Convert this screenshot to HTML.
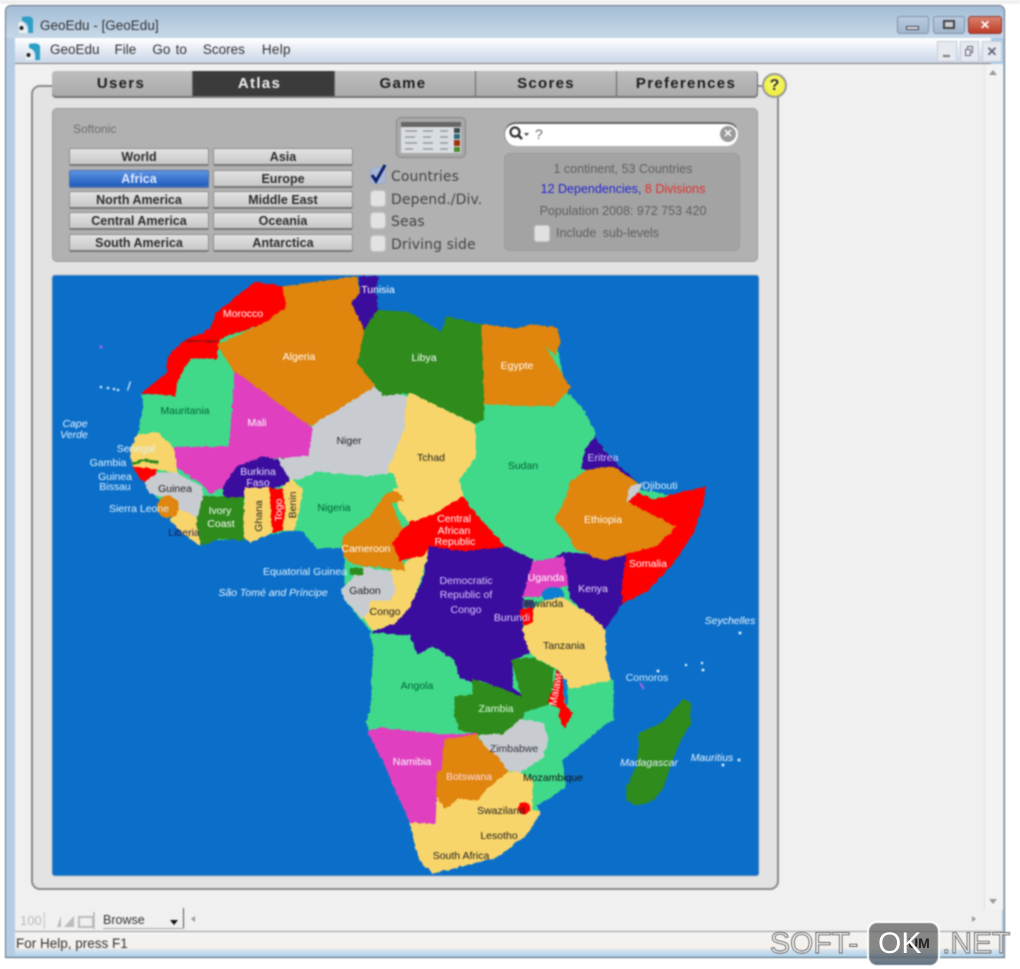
<!DOCTYPE html>
<html><head><meta charset="utf-8"><style>
html,body{margin:0;padding:0;width:1020px;height:969px;overflow:hidden;background:#fff}
body{font-family:"Liberation Sans",sans-serif;position:relative}
#w{position:absolute;left:0;top:0;width:1020px;height:969px;filter:blur(.7px)}
.a{position:absolute}
.t{position:absolute;top:71px;height:26px;background:linear-gradient(#bdbdbd,#aaa);border-right:1px solid #666;border-bottom:1px solid #777;box-sizing:border-box;font:bold 15px/25px "Liberation Sans",sans-serif;letter-spacing:1.3px;text-align:center;color:#1c1c1c}
.b{position:absolute;width:140px;height:18px;background:linear-gradient(#e2e2e2,#c8c8c8);border:1px solid #8e8e8e;border-bottom:2px solid #777;box-sizing:border-box;border-radius:2px;font:bold 12.5px/17px "Liberation Sans",sans-serif;text-align:center;color:#2c2c2c}
.c{position:absolute;left:370px;width:16px;height:17px;background:#e2e2e2;border:1px solid #c4c4c4;border-radius:4px;box-sizing:border-box}
.l{position:absolute;left:391px;font:14px/18px "DejaVu Sans",sans-serif;color:#444;letter-spacing:.1px;white-space:nowrap}
.i{position:absolute;left:504px;width:238px;text-align:center;font:12.5px/14px "Liberation Sans",sans-serif;color:#5f5f5f;white-space:nowrap}
svg text{font-family:"Liberation Sans",sans-serif;font-size:10.5px;text-anchor:middle}
.wt{fill:#fff}.dk{fill:#222}.pl{fill:#d9c8ff}.it{font-style:italic;fill:#e8f4ff}
#land polygon[fill="#3fd98a"]{stroke:#3fd98a}
#land polygon[fill="#ff0000"]{stroke:#ff0000}
#land polygon[fill="#e08508"]{stroke:#e08508}
#land polygon[fill="#3a0d9e"]{stroke:#3a0d9e}
#land polygon[fill="#2e8b1e"]{stroke:#2e8b1e}
#land polygon[fill="#f8d56a"]{stroke:#f8d56a}
#land polygon[fill="#c8ccd0"]{stroke:#c8ccd0}
#land polygon[fill="#e03fc0"]{stroke:#e03fc0}
#land polygon{stroke-width:1.2}
</style></head><body><div id="w">
<div class="a" style="left:0;top:0;width:1020px;height:4px;background:#efefef"></div>
<div class="a" style="left:5px;top:5px;width:1000px;height:953px;background:linear-gradient(90deg,#b4cde4,#c8d8e8 50%,#a9c9e6);border:1px solid #66727e;border-radius:6px 6px 0 0;box-sizing:border-box"></div>
<div class="a" style="left:6px;top:6px;width:998px;height:32px;background:linear-gradient(#a3bdd6,#c7d8e8);border-radius:5px 5px 0 0"></div>
<svg class="a" style="left:17px;top:15px" width="18" height="20"><path d="M5 2 Q14 0 16 4 L16 18 L11 18 Q13 8 5 6z" fill="#2d9fc6"/><path d="M1 8 Q8 3 11 18 L2 18z" fill="#e8eef2"/><circle cx="4.500" cy="13" r="2" fill="#222"/></svg>
<div class="a" style="left:40px;top:18px;font-size:13.5px;line-height:16px;color:#333">GeoEdu - [GeoEdu]</div>
<div class="a" style="left:897px;top:16px;width:32px;height:18px;background:linear-gradient(#b9cade,#a0b5cb);border:1px solid #7f93aa;border-radius:3px;box-sizing:border-box"></div>
<div class="a" style="left:906px;top:26px;width:13px;height:4px;border:1px solid #445;background:#e4e4e4;box-sizing:border-box"></div>
<div class="a" style="left:933px;top:16px;width:32px;height:18px;background:linear-gradient(#b9cade,#a0b5cb);border:1px solid #7f93aa;border-radius:3px;box-sizing:border-box"></div>
<div class="a" style="left:943px;top:20px;width:12px;height:9px;border:2px solid #444;background:#c9ced4;box-sizing:border-box"></div>
<div class="a" style="left:968px;top:16px;width:34px;height:18px;background:linear-gradient(#d9826f,#be3c26);border:1px solid #8a3d33;border-radius:3px;box-sizing:border-box;color:#fff;font:bold 12px/16px 'Liberation Sans',sans-serif;text-align:center">✕</div>

<div class="a" style="left:15px;top:38px;width:976px;height:25px;background:linear-gradient(#fff,#ced9ea 90%);border-bottom:1px solid #7c7c7c"></div>
<svg class="a" style="left:24px;top:42px" width="18" height="20"><path d="M5 2 Q14 0 16 4 L16 18 L11 18 Q13 8 5 6z" fill="#2d9fc6"/><path d="M1 8 Q8 3 11 18 L2 18z" fill="#e8eef2"/><circle cx="4.500" cy="13" r="2" fill="#222"/></svg>
<div class="a" style="left:50px;top:42px;font-size:13.5px;line-height:16px;color:#333;white-space:nowrap">GeoEdu<span style="margin-left:15px">File</span><span style="margin-left:16px;word-spacing:1.500px">Go to</span><span style="margin-left:16px">Scores</span><span style="margin-left:17px;letter-spacing:.3px">Help</span></div>
<div class="a" style="left:937px;top:41px;width:20px;height:21px;background:#e6e9ef;border:1px solid #c6ced9;box-sizing:border-box"></div>
<div class="a" style="left:943px;top:55px;width:7px;height:2px;background:#777"></div>
<div class="a" style="left:960px;top:41px;width:19px;height:21px;background:#e6e9ef;border:1px solid #c6ced9;box-sizing:border-box"></div>
<div class="a" style="left:967px;top:46px;width:6px;height:7px;border:1px solid #667;box-sizing:border-box"></div>
<div class="a" style="left:965px;top:49px;width:6px;height:7px;border:1px solid #667;background:#e6e9ef;box-sizing:border-box"></div>
<div class="a" style="left:982px;top:41px;width:20px;height:21px;background:#e6e9ef;border:1px solid #c6ced9;box-sizing:border-box;font:bold 13px/19px 'Liberation Sans',sans-serif;text-align:center;color:#667">✕</div>

<div class="a" style="left:15px;top:64px;width:987px;height:868px;background:#f0f0f0"></div>
<div class="a" style="left:984px;top:64px;width:18px;height:846px;background:#f3f3f3;border-left:1px solid #e2e2e2"></div>
<div class="a" style="left:989px;top:70px;width:0;height:0;border:4px solid transparent;border-bottom:5px solid #999;border-top:0"></div>
<div class="a" style="left:989px;top:899px;width:0;height:0;border:4px solid transparent;border-top:5px solid #999;border-bottom:0"></div>

<div class="a" style="left:31px;top:85px;width:748px;height:805px;background:#e3e3e3;border:2px solid #8a8a8a;border-radius:9px;box-sizing:border-box"></div>
<div class="a" style="left:52px;top:71px;width:706px;height:26px;background:#aaa;border-radius:4px;overflow:hidden;box-shadow:0 1px 0 #777"></div>
<div class="t" style="left:52px;width:141px;border-radius:4px 0 0 4px;padding-right:2px">Users</div>
<div class="t" style="left:193px;width:142px;background:#3b3b3b;color:#eee;padding-right:8px">Atlas</div>
<div class="t" style="left:335px;width:141px;padding-right:4px">Game</div>
<div class="t" style="left:476px;width:141px">Scores</div>
<div class="t" style="left:617px;width:141px;border-radius:0 4px 4px 0;padding-right:2px">Preferences</div>
<div class="a" style="left:762px;top:73px;width:25px;height:25px;border-radius:50%;background:radial-gradient(circle at 50% 40%,#fbfb7a,#e8e828);border:2px solid #999;box-sizing:border-box;font:bold 16px/21px 'Liberation Sans',sans-serif;text-align:center;color:#333">?</div>

<div class="a" style="left:52px;top:108px;width:706px;height:154px;background:#b1b1b1;border-radius:5px;border:1px solid #9d9d9d;box-sizing:border-box"></div>
<div class="a" style="left:73px;top:122px;font-size:12px;line-height:14px;color:#6e6e6e">Softonic</div>
<div class="b" style="left:69px;top:148px">World</div>
<div class="b" style="left:213px;top:148px">Asia</div>
<div class="b" style="left:69px;top:170px;background:linear-gradient(#5d93e2,#1f5cbd);color:#dfeaff;border-color:#4c6fa8">Africa</div>
<div class="b" style="left:213px;top:170px">Europe</div>
<div class="b" style="left:69px;top:191px">North America</div>
<div class="b" style="left:213px;top:191px">Middle East</div>
<div class="b" style="left:69px;top:212px">Central America</div>
<div class="b" style="left:213px;top:212px">Oceania</div>
<div class="b" style="left:69px;top:234px">South America</div>
<div class="b" style="left:213px;top:234px">Antarctica</div>

<div class="a" style="left:396px;top:117px;width:70px;height:41px;background:#a8a8a8;border:1px solid #888;border-radius:5px;box-sizing:border-box"></div>
<svg class="a" style="left:396px;top:117px" width="70" height="41">
<rect x="5" y="5" width="60" height="31" fill="#d9dde2"/><rect x="5" y="5" width="60" height="5" fill="#666"/>
<g stroke="#8a8f96" stroke-width="1.200"><path d="M9 14h12M27 14h10M44 14h8M9 20h10M27 20h8M44 20h8M9 26h12M27 26h10M44 26h8M9 32h8M27 32h10M44 32h8"/></g>
<rect x="58" y="11" width="6" height="5" fill="#3a4a4a"/><rect x="58" y="17" width="6" height="5" fill="#2a6a7a"/><rect x="58" y="23" width="6" height="6" fill="#a03010"/><rect x="58" y="30" width="6" height="5" fill="#4a8a2a"/>
</svg>

<div class="c" style="top:167px;background:#a9b7d6;border-color:#9aa8c8"></div>
<svg class="a" style="left:368px;top:162px" width="22" height="24"><path d="M4 13 L8 19 L17 3" fill="none" stroke="#0a1f6e" stroke-width="3"/></svg>
<div class="l" style="top:168px">Countries</div>
<div class="c" style="top:190px"></div><div class="l" style="top:191px">Depend./Div.</div>
<div class="c" style="top:212px"></div><div class="l" style="top:213px">Seas</div>
<div class="c" style="top:235px"></div><div class="l" style="top:236px">Driving side</div>

<div class="a" style="left:504px;top:122px;width:235px;height:24px;background:#fff;border-radius:12px;border-top:2px solid #666;border-left:1px solid #888;border-right:1px solid #aaa;box-sizing:border-box"></div>
<svg class="a" style="left:508px;top:125px" width="24" height="18"><circle cx="7" cy="7" r="4.500" fill="none" stroke="#333" stroke-width="2.200"/><path d="M10 10 L14 14" stroke="#333" stroke-width="2.600"/><path d="M16 8h5l-2.500 3z" fill="#444"/></svg>
<div class="a" style="left:535px;top:126px;font-size:14px;line-height:16px;color:#666">?</div>
<div class="a" style="left:720px;top:126px;width:16px;height:16px;border-radius:50%;background:#9a9a9a;font:bold 11px/16px 'Liberation Sans',sans-serif;text-align:center;color:#fff">✕</div>

<div class="a" style="left:504px;top:153px;width:236px;height:98px;background:#a3a3a3;border-radius:6px;border:1px solid #9a9a9a;box-sizing:border-box"></div>
<div class="i" style="top:162px">1 continent, 53 Countries</div>
<div class="i" style="top:182px"><span style="color:#2525d0">12 Dependencies,</span> <span style="color:#e0302c">8 Divisions</span></div>
<div class="i" style="top:204px">Population 2008: 972 753 420</div>
<div class="a" style="left:534px;top:225px;width:16px;height:17px;background:#e0e0e0;border:1px solid #c4c4c4;border-radius:3px;box-sizing:border-box"></div>
<div class="a" style="left:556px;top:226px;font-size:12.5px;line-height:14px;color:#5f5f5f;word-spacing:3px">Include sub-levels</div>

<svg class="a" style="left:0;top:0" width="1020" height="969">
<defs><filter id="r" filterUnits="userSpaceOnUse" x="50" y="270" width="710" height="610"><feTurbulence type="fractalNoise" baseFrequency=".22" numOctaves="2" seed="4"/><feDisplacementMap in="SourceGraphic" scale="3.500" xChannelSelector="R" yChannelSelector="G"/></filter></defs>
<rect x="52" y="275" width="707" height="601" rx="3" fill="#0b6fc9" stroke="#a9b4bf"/>
<g id="land" stroke-linejoin="round" filter="url(#r)">
<polygon fill="#3fd98a" points="240,300 280,290 355,280 375,310 440,335 480,330 555,335 565,390 590,433 620,470 640,490 690,500 670,560 620,600 600,635 605,680 610,720 562,760 560,790 530,810 500,850 430,865 415,825 385,760 372,730 372,680 375,635 345,600 345,545 315,545 300,528 250,538 205,540 150,490 135,450 145,400 175,375 190,350"/>
<polygon fill="#3fd98a" points="190,358 216,358 218,350 240,372 235,372 230,447 173,448 157,433 138,435 145,413 142,395 175,395 177,380"/>
<polygon fill="#ff0000" points="255,282 283,287 287,307 267,322 220,338 216,358 190,358 177,380 175,395 142,393 167,373 168,357 183,342 210,330 217,313 237,297"/>
<path d="M184 341h33" stroke="#7a1a1a" stroke-width="1.200"/>
<polygon fill="#e08508" points="283,287 357,277 360,303 352,303 365,330 358,363 375,387 317,423 307,425 235,372 218,345 267,322 287,307"/>
<polygon fill="#3a0d9e" points="360,277 378,277 375,290 378,310 365,330 352,303 360,293"/>
<polygon fill="#c8ccd0" points="317,423 375,387 390,393 407,397 410,430 390,470 393,473 367,477 317,472 300,478 290,480 277,460 307,455 312,427"/>
<polygon fill="#2e8b1e" points="378,310 410,313 442,333 447,317 482,325 485,420 475,423 410,393 403,393 383,395 358,363 365,330"/>
<polygon fill="#e08508" points="482,325 517,329 533,325 557,328 560,342 555,355 542,342 570,388 553,407 485,405"/>
<polygon fill="#3fd98a" points="485,405 553,407 570,395 583,410 595,433 582,470 567,497 555,520 568,533 575,548 533,560 505,547 487,527 472,510 463,497 458,480 475,457 475,425 485,420"/>
<polygon fill="#f8d56a" points="410,393 475,425 475,457 458,480 463,497 433,515 410,523 400,510 388,470 405,430 407,397"/>
<polygon fill="#e03fc0" points="235,372 307,425 312,427 308,455 277,458 263,457 237,467 223,487 210,493 202,483 193,478 177,467 173,448 230,447"/>
<polygon fill="#f8d56a" points="138,435 157,433 173,448 177,472 157,470 133,467 130,450"/>
<path d="M132 464 L145 460 L158 463" fill="none" stroke="#2e8b1e" stroke-width="2.500"/>
<polygon fill="#ff0000" points="133,467 157,470 150,482 142,480"/>
<polygon fill="#c8ccd0" points="145,483 157,473 177,473 202,487 203,497 197,518 180,510 167,497 150,493"/>
<polygon fill="#f8d56a" points="180,510 197,518 198,528 200,545 183,533 170,520"/>
<ellipse cx="168" cy="507" rx="11" ry="11" fill="#e08508"/>
<polygon fill="#2e8b1e" points="203,497 223,497 243,498 244,540 220,538 202,545 197,523"/>
<polygon fill="#3a0d9e" points="223,487 237,467 263,457 277,460 288,478 288,483 270,488 245,488 243,497 225,497"/>
<polygon fill="#f8d56a" points="245,488 270,488 273,532 250,542 244,537"/>
<polygon fill="#f8d56a" points="282,488 292,480 303,490 295,530 282,530"/>
<polygon fill="#ff0000" points="270,488 282,490 285,508 282,530 273,532"/>
<polygon fill="#3fd98a" points="303,480 317,472 367,477 393,473 397,487 387,493 370,517 343,537 343,547 317,548 310,532 295,530 303,497"/>
<polygon fill="#f8d56a" points="390,572 405,565 410,560 423,552 430,547 420,580 410,608 397,623 373,630 362,615 370,600 390,600 395,590"/>
<polygon fill="#e08508" points="397,492 403,500 390,503 403,530 393,543 405,570 363,565 352,563 343,553 343,537 370,517 387,493"/>
<polygon fill="#ff0000" points="403,530 410,523 433,515 463,497 472,510 487,527 505,547 465,552 430,547 423,555 400,560 393,543"/>
<polygon fill="#c8ccd0" points="363,567 390,572 395,590 390,600 370,600 368,612 362,618 345,600 342,590"/>
<rect x="350" y="568" width="13" height="7" fill="#2e8b1e"/>
<polygon fill="#3fd98a" points="370,633 410,635 418,654 433,645 455,660 458,677 473,678 473,695 455,697 455,717 462,733 443,735 370,732 367,722 377,687 378,660"/>
<polygon fill="#3a0d9e" points="430,547 465,552 505,547 533,560 527,590 523,597 522,623 530,652 512,660 512,687 523,698 512,693 480,680 473,682 460,677 455,660 433,645 418,654 410,635 373,632 397,623 410,608 423,580"/>
<polygon fill="#3a0d9e" points="563,552 590,555 607,560 627,553 622,590 623,602 605,628 590,615 570,598 568,580 540,570"/>
<polygon fill="#e03fc0" points="533,562 563,557 568,585 548,590 540,596 523,597 528,580"/>
<ellipse cx="553" cy="595" rx="11" ry="8" fill="#0b7fd0"/>
<polygon fill="#3fd98a" points="561,684 613,680 613,720 593,730 563,757 562,760 565,787 533,803 540,812 532,810 532,780 520,772 543,757 547,730 537,722 523,712 548,705"/>
<polygon fill="#f8d56a" points="560,597 593,617 605,630 605,657 610,680 570,688 560,670 537,658 530,652 523,630 533,610 543,602"/>
<polygon fill="#ff0000" points="520,610 533,608 532,622 524,624"/>
<rect x="522" y="600" width="12" height="8" fill="#3a4a8a"/>
<polygon fill="#ff0000" points="627,502 638,493 653,500 705,487 703,503 693,533 673,563 648,590 623,603 622,590 627,553 657,545 675,527"/>
<polygon fill="#3a0d9e" points="595,437 603,450 620,467 637,483 613,467 587,470 582,468 585,450"/>
<polygon fill="#e08508" points="587,470 613,467 637,483 627,502 675,527 657,545 627,553 603,560 575,548 568,533 555,520 567,497 570,483"/>
<polygon fill="#c8ccd0" points="627,502 630,487 642,483 638,492"/>
<polygon fill="#0b7fd0" points="562,678 567,680 568,705 564,703" style="stroke:none"/>
<polygon fill="#2e8b1e" points="473,680 512,693 522,698 512,660 533,658 553,668 552,697 548,705 523,712 523,718 503,735 483,735 460,730 455,717 455,697 473,695"/>
<polygon fill="#ff0000" points="557,670 562,677 563,703 572,713 565,727 560,720 560,708 548,702 553,690"/>
<polygon fill="#c8ccd0" points="480,735 503,735 520,720 543,723 547,740 543,757 520,772 507,770 500,760 485,747"/>
<polygon fill="#f8d56a" points="507,772 520,773 532,780 532,810 540,812 527,833 497,857 457,867 433,873 420,860 410,823 435,823 437,797 445,808 457,798 477,800 487,788"/>
<polygon fill="#e03fc0" points="368,732 380,728 443,735 477,734 445,740 442,770 437,772 435,823 410,822 397,793 383,760"/>
<polygon fill="#e08508" points="445,740 477,735 485,747 500,760 507,772 487,788 477,800 457,798 445,808 437,797 437,772 442,770"/>
<circle cx="524" cy="808" r="6" fill="#ff0000"/>
<polygon fill="#2e8b1e" points="683,700 690,703 690,723 677,747 663,787 653,800 637,805 627,800 627,787 637,767 640,733 663,723"/>
</g>
<g fill="#cfe8fa"><circle cx="101" cy="347" r="1.500" fill="#b060e0"/><circle cx="101" cy="387" r="1.300"/><circle cx="108" cy="388" r="1.300"/><circle cx="114" cy="389" r="1.300"/><circle cx="118" cy="390" r="1.300"/><path d="M127 390l3-9 1 1-3 9z"/><circle cx="658" cy="671" r="1.500"/><circle cx="703" cy="670" r="1.500"/><circle cx="686" cy="665" r="1.300"/><circle cx="702" cy="663" r="1.300"/><circle cx="739" cy="760" r="1.500"/><circle cx="723" cy="765" r="1.500"/><circle cx="740" cy="633" r="1.500"/><path d="M640 683l4 6" stroke="#b060e0" stroke-width="2"/></g>

<text class="wt" x="243" y="317">Morocco</text>
<text class="wt" x="299" y="360">Algeria</text>
<text class="wt" x="378" y="293">Tunisia</text>
<text class="wt" x="424" y="361">Libya</text>
<text class="wt" x="517" y="369">Egypte</text>
<text class="dk" x="185" y="414" style="fill:#063">Mauritania</text>
<text class="wt" x="257" y="426">Mali</text>
<text class="dk" x="349" y="444">Niger</text>
<text class="dk" x="431" y="461">Tchad</text>
<text class="dk" x="523" y="469" style="fill:#063">Sudan</text>
<text class="pl" x="603" y="461">Eritrea</text>
<text class="wt" x="660" y="489" style="fill:#dff2ff">Djibouti</text>
<text class="wt" x="603" y="523">Ethiopia</text>
<text class="wt" x="454" y="522">Central</text><text class="wt" x="454" y="534">African</text><text class="wt" x="455" y="545">Republic</text>
<text class="wt" x="648" y="567">Somalia</text>
<text class="it" x="75" y="427" font-size="10">Cape</text><text class="it" x="74" y="438">Verde</text>
<text fill="#dff2ff" x="136" y="452">Senegal</text>
<text fill="#dff2ff" x="108" y="466">Gambia</text>
<text fill="#dff2ff" x="115" y="480">Guinea</text><text fill="#dff2ff" x="115" y="490">Bissau</text>
<text fill="#dff2ff" x="139" y="512">Sierra Leone</text>
<text class="dk" x="175" y="492">Guinea</text>
<text class="dk" x="184" y="536" style="fill:#1a1a5a">Liberia</text>
<text class="wt" x="220" y="514">Ivory</text><text class="wt" x="221" y="527">Coast</text>
<text class="pl" x="258" y="475" style="fill:#e8ddff">Burkina</text><text class="pl" x="258" y="486" style="fill:#e8ddff">Faso</text>
<text class="dk" transform="translate(262,516) rotate(-90)">Ghana</text>
<text class="wt" transform="translate(282,510) rotate(-90)">Togo</text>
<text class="dk" transform="translate(296,505) rotate(-90)">Benin</text>
<text class="dk" x="334" y="511" style="fill:#063">Nigeria</text>
<text class="wt" x="366" y="552">Cameroon</text>
<text fill="#dff2ff" x="305" y="575">Equatorial Guinea</text>
<text class="it" x="273" y="596">São Tomé and Príncipe</text>
<text class="dk" x="365" y="594">Gabon</text>
<text class="dk" x="385" y="615">Congo</text>
<text class="pl" x="466" y="584">Democratic</text><text class="pl" x="466" y="598">Republic of</text><text class="pl" x="466" y="613">Congo</text>
<text class="wt" x="546" y="581">Uganda</text>
<text class="pl" x="593" y="592" style="fill:#e8ddff">Kenya</text>
<text class="dk" x="544" y="607">Rwanda</text>
<text class="pl" x="512" y="621" style="fill:#e0d0ff">Burundi</text>
<text class="dk" x="564" y="649">Tanzania</text>
<text class="it" x="730" y="624">Seychelles</text>
<text fill="#d0e8ff" x="647" y="681">Comoros</text>
<text class="dk" x="417" y="689" style="fill:#063">Angola</text>
<text class="wt" x="496" y="712" style="fill:#dfd">Zambia</text>
<text class="wt" transform="translate(559,690) rotate(-80)">Malawi</text>
<text class="dk" x="514" y="752" style="fill:#334">Zimbabwe</text>
<text class="wt" x="412" y="765">Namibia</text>
<text class="wt" x="469" y="780" style="fill:#fde">Botswana</text>
<text class="dk" x="553" y="781" style="fill:#111">Mozambique</text>
<text class="it" x="649" y="766">Madagascar</text>
<text class="it" x="712" y="761">Mauritius</text>
<text class="dk" x="501" y="814">Swaziland</text>
<text class="dk" x="499" y="839">Lesotho</text>
<text class="dk" x="461" y="859">South Africa</text>
</svg>

<div class="a" style="left:15px;top:910px;width:987px;height:21px;background:#f0f0f0;border-bottom:1px solid #999"></div>
<div class="a" style="left:20px;top:913px;font-size:13px;line-height:15px;color:#bbb">100</div>
<svg class="a" style="left:44px;top:910px" width="60" height="20"><path d="M0 2v17M50 2v17" stroke="#999"/><path d="M4 17h9l4-11v11z M20 17l10-11v11z" fill="#bbb"/><rect x="35" y="7" width="14" height="10" fill="none" stroke="#bbb" stroke-width="2"/></svg>
<div class="a" style="left:103px;top:913px;font-size:12.5px;line-height:15px;color:#333">Browse</div>
<div class="a" style="left:170px;top:920px;width:0;height:0;border:4px solid transparent;border-top:5px solid #111;border-bottom:0"></div>
<div class="a" style="left:183px;top:908px;width:1px;height:20px;background:#555"></div>
<div class="a" style="left:103px;top:928px;width:81px;height:1px;background:#aaa"></div>
<div class="a" style="left:191px;top:916px;width:0;height:0;border:3px solid transparent;border-right:4px solid #999;border-left:0"></div>
<div class="a" style="left:972px;top:916px;width:0;height:0;border:3px solid transparent;border-left:4px solid #999;border-right:0"></div>
<div class="a" style="left:15px;top:932px;width:987px;height:21px;background:linear-gradient(#f3f3f3,#f6efe9)"></div>
<div class="a" style="left:15px;top:949px;width:987px;height:9px;background:linear-gradient(#dbe6ef,#a7cce9)"></div>
<div class="a" style="left:5px;top:957px;width:1000px;height:1px;background:#46606e"></div>
<div class="a" style="left:16px;top:936px;font-size:13.5px;line-height:16px;color:#333">For Help, press F1</div>
</div>

<div class="a" style="left:867px;top:921px;width:73px;height:46px;border:2px solid #fff;border-radius:10px;box-sizing:border-box;background:linear-gradient(rgba(90,90,90,.72),rgba(95,95,95,.72) 70%,rgba(80,100,120,.9));filter:blur(.4px)"></div>
<div class="a" style="left:908px;top:935px;font:bold 14px/16px 'Liberation Sans',sans-serif;color:#222">UM</div>
<div class="a" style="left:770px;top:927px;font-size:30px;line-height:34px;color:#f0f0f0;-webkit-text-stroke:.9px #666;white-space:nowrap;filter:blur(.4px)">SOFT-</div>
<div class="a" style="left:878px;top:927px;font-size:30px;line-height:34px;color:#fff;white-space:nowrap;filter:blur(.3px)">OK</div>
<div class="a" style="left:942px;top:927px;font-size:30px;line-height:34px;color:#f0f0f0;-webkit-text-stroke:.9px #666;white-space:nowrap;filter:blur(.4px)">.NET</div>
</body></html>
